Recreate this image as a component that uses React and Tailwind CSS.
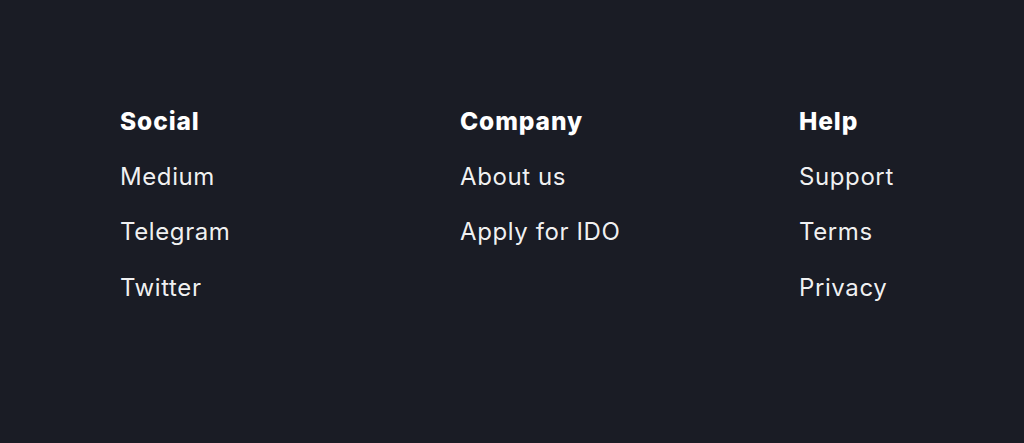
import React from 'react';

const columns = [
  { title: 'Social', links: ['Medium', 'Telegram', 'Twitter'] },
  { title: 'Company', links: ['About us', 'Apply for IDO'] },
  { title: 'Help', links: ['Support', 'Terms', 'Privacy'] },
];

export default function App() {
  return (
    <div
      className="h-[443px] w-full bg-[#1a1c25] pt-[105px] pl-[120px]"
      style={{ fontFamily: 'Inter, "Noto Sans", sans-serif' }}
    >
      <div className="grid grid-cols-[340px_339px_auto]">
        {columns.map((col) => (
          <div key={col.title} className="flex flex-col gap-[23.5px]">
            <h3 className="text-[24.5px] leading-8 font-extrabold tracking-[0.9px] text-white">{col.title}</h3>
            {col.links.map((link) => (
              <a key={link} href="#" className="text-[24px] leading-8 tracking-[0.6px] text-white/95">
                {link}
              </a>
            ))}
          </div>
        ))}
      </div>
    </div>
  );
}
